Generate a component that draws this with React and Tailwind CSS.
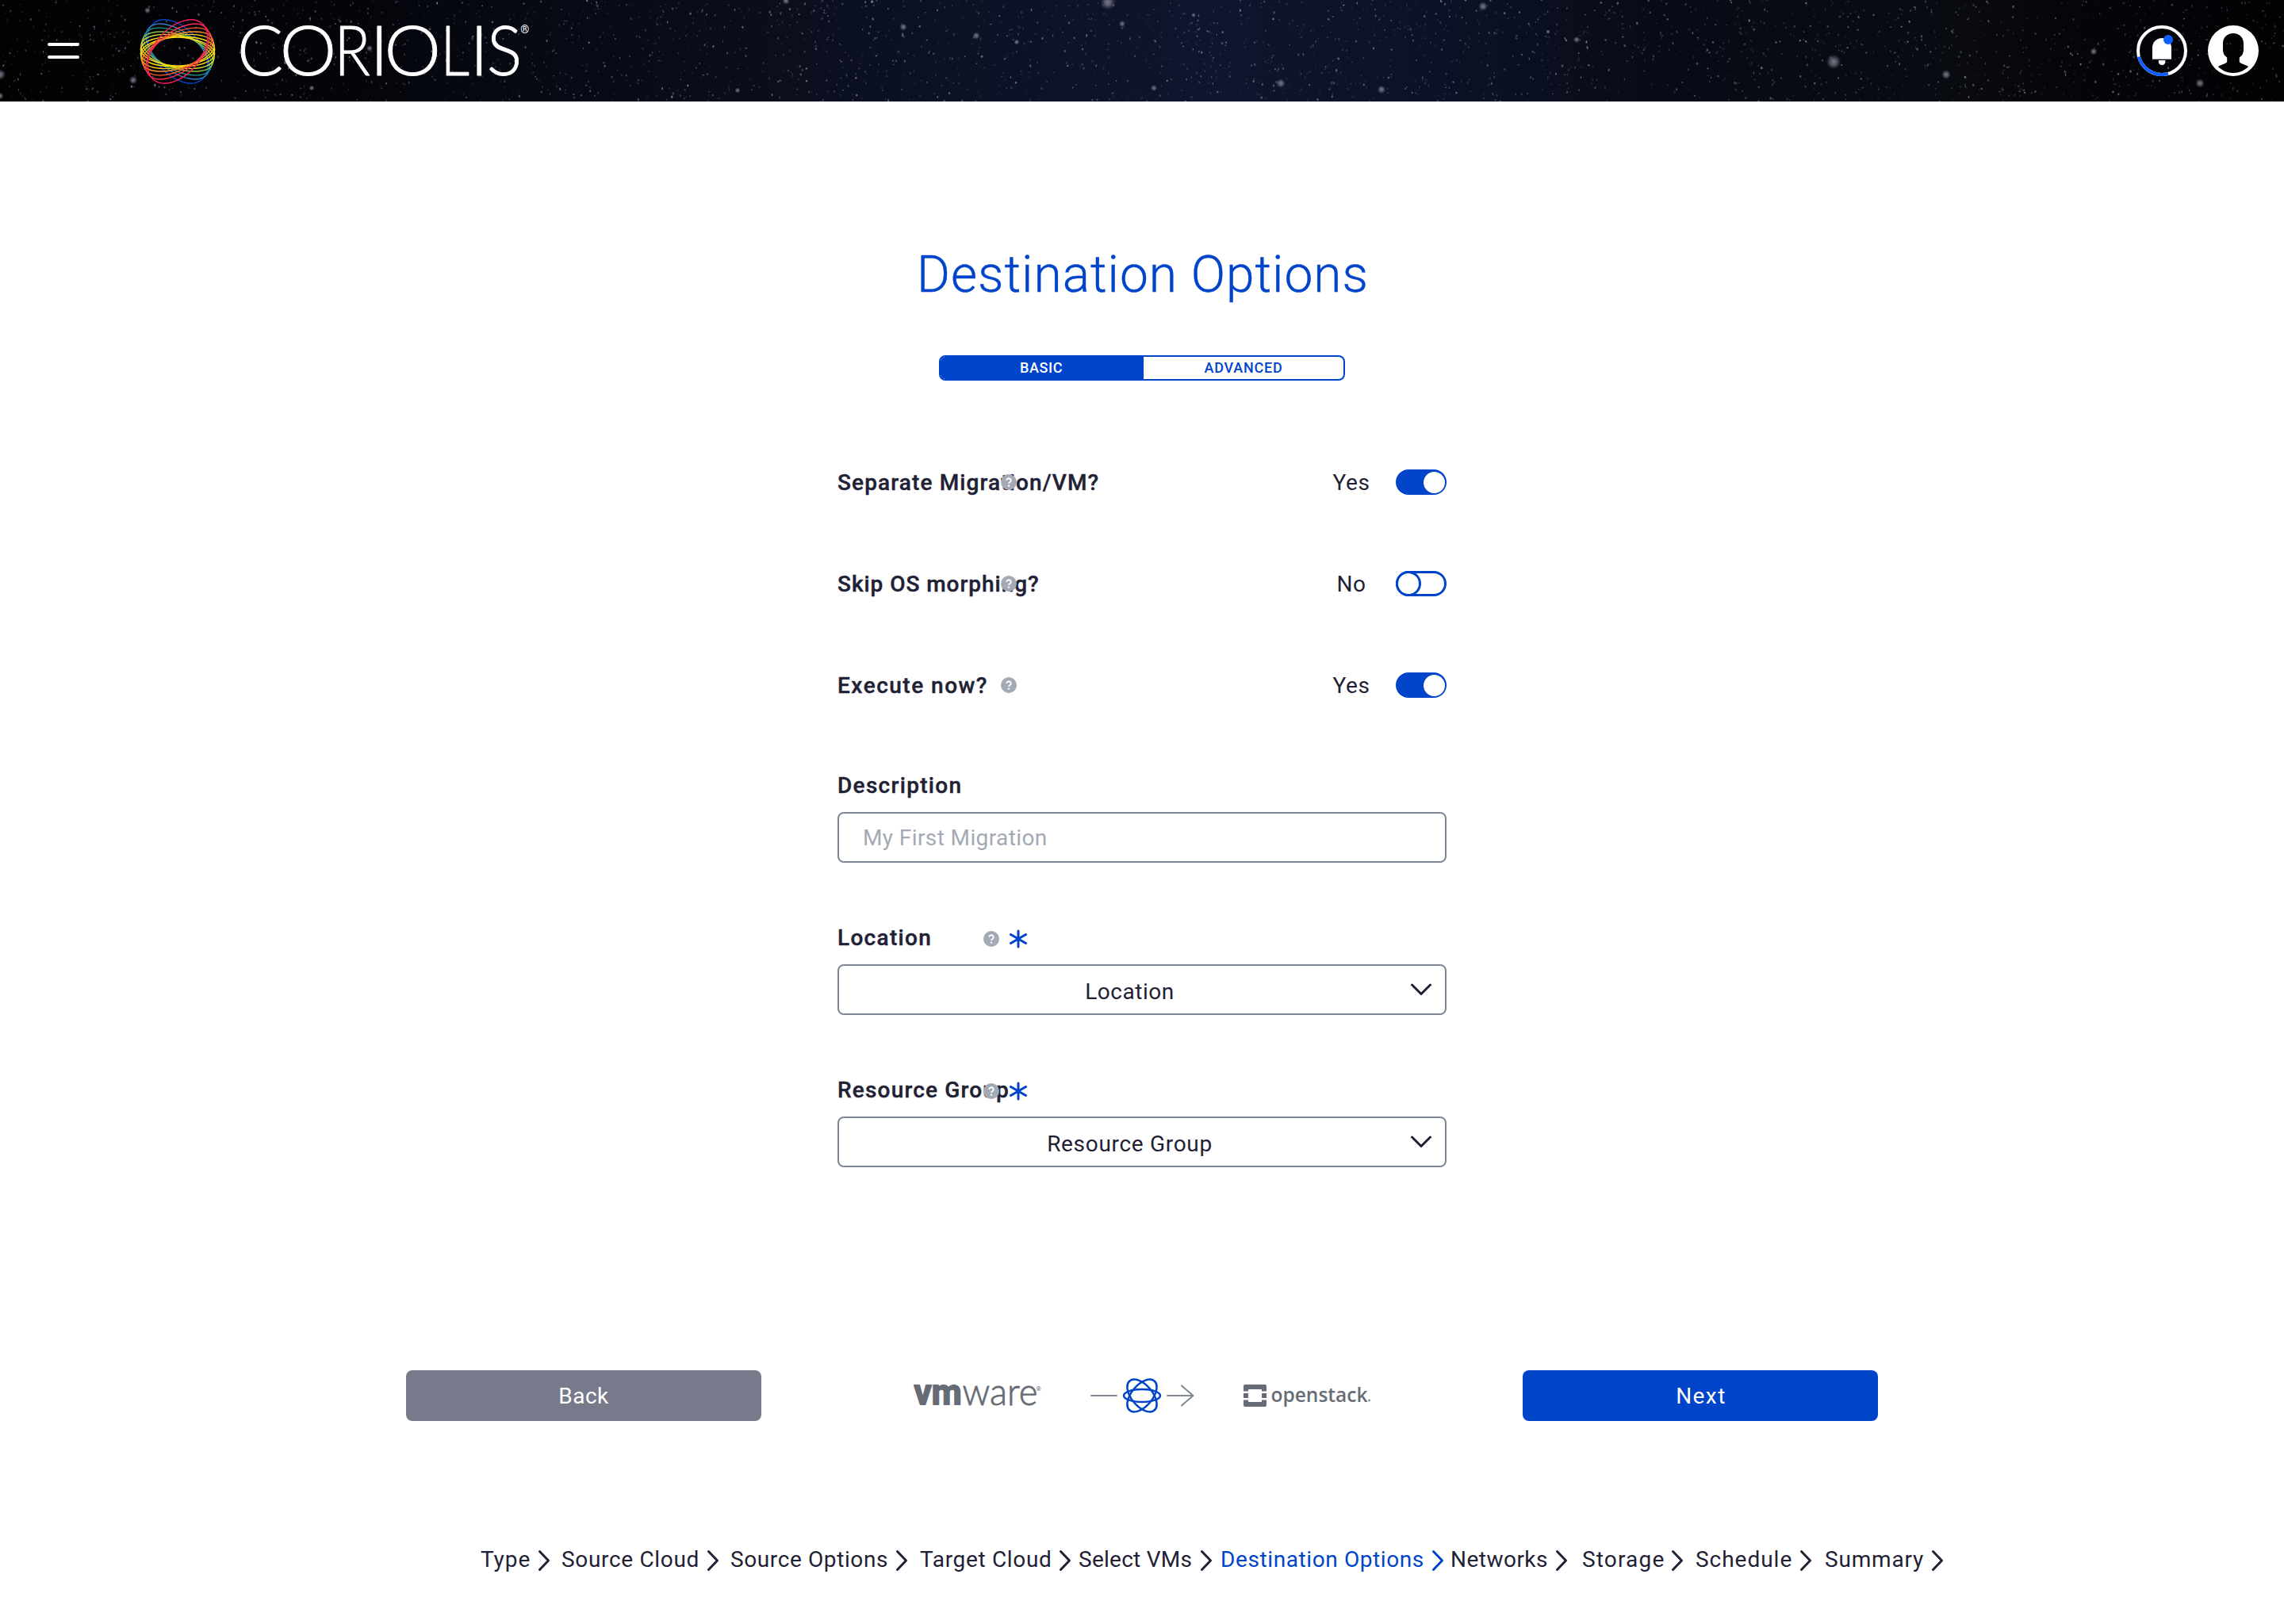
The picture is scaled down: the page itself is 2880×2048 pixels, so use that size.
import React from "react";

const FONT = "font-['Roboto','Open_Sans',sans-serif]";

/* Small seeded generator, so that the star field is the same on each load. */
function makeStars(count) {
  let seed = 20177;
  const next = () => {
    seed = (seed * 1664525 + 1013904223) % 4294967296;
    return seed / 4294967296;
  };
  return Array.from({ length: count }, () => ({
    x: next() * 2880,
    y: next() * 128,
    rx: 0.6 + next() * 0.8,
    ry: 0.7 + next() * 1.1,
    o: 0.1 + next() * next() * 0.55,
    a: next() * 60 - 30,
  }));
}

const STARS = makeStars(2500);

const GLOWS = [
  [186, 13, 3.5], [0, 94, 6], [168, 101, 4.5], [0, 121, 4], [466, 61, 3.5], [1397, 3, 8],
  [1870, 8, 5], [1139, 34, 4], [1231, 45, 4], [1282, 53, 3], [1988, 50, 3.5], [2312, 78, 8],
  [2454, 94, 5], [1615, 105, 5], [1742, 113, 4.5], [1455, 111, 3.5], [930, 114, 3],
  [1505, 19, 2.5], [1415, 30, 3.5], [991, 1, 4], [1952, 40, 2.5], [2774, 105, 5],
  [2640, 65, 4], [360, 79, 2.5], [393, 111, 3],
];

function StarField() {
  return (
    <svg className="absolute inset-0" width="2880" height="128" viewBox="0 0 2880 128">
      <defs>
        <linearGradient id="sky" x1="0" x2="1" y1="0" y2="0">
          <stop offset="0" stopColor="#020203" />
          <stop offset="0.15" stopColor="#04050a" />
          <stop offset="0.27" stopColor="#080b17" />
          <stop offset="0.4" stopColor="#0c1122" />
          <stop offset="0.53" stopColor="#0e152e" />
          <stop offset="0.63" stopColor="#0c1226" />
          <stop offset="0.73" stopColor="#080b16" />
          <stop offset="0.86" stopColor="#090b11" />
          <stop offset="0.9" stopColor="#05060b" />
          <stop offset="1" stopColor="#020204" />
        </linearGradient>
        <radialGradient id="glow">
          <stop offset="0" stopColor="#8b8b99" stopOpacity="0.85" />
          <stop offset="0.45" stopColor="#77788a" stopOpacity="0.65" />
          <stop offset="1" stopColor="#50546a" stopOpacity="0" />
        </radialGradient>
      </defs>
      <rect width="2880" height="128" fill="url(#sky)" />
      {STARS.map((s, i) => (
        <ellipse key={i} cx={s.x} cy={s.y} rx={s.rx} ry={s.ry} fill="#b9bccb" opacity={s.o}
          transform={`rotate(${s.a} ${s.x} ${s.y})`} />
      ))}
      {GLOWS.map(([x, y, r], i) => (
        <circle key={i} cx={x} cy={y} r={r * 1.2} fill="url(#glow)" />
      ))}
    </svg>
  );
}

const RINGS = [
  [18.3, 4, "#ffd21e", "#ffe500"],
  [20, 11, "#cddc39", "#ffc61a"],
  [21, 19, "#8bc34a", "#ff9429"],
  [23, 28, "#1c9c86", "#ff5a2b"],
  [25, 38, "#2f7fc1", "#ff2d55"],
  [29, 49, "#0044ca", "#f81d5e"],
];

/* glyph, scaled left edge, horizontal scale */
const WORDMARK = [
  ["C", 299, 1], ["O", 352.8, 1.05], ["R", 421.5, 0.87], ["I", 466.5, 1.05],
  ["O", 484.5, 1.05], ["L", 555.5, 0.84], ["I", 592.5, 1.05], ["S", 614, 0.96],
];

function CoriolisLogo() {
  return (
    <svg width="504" height="128" viewBox="176 0 504 128">
      <g fill="none" strokeWidth="1.4">
        {RINGS.slice().reverse().map(([b, t, cool]) => (
          <ellipse key={"c" + t} cx="224" cy="65" rx="46.8" ry={b} stroke={cool} transform={`rotate(${t} 224 65)`} />
        ))}
        {RINGS.map(([b, t, , warm]) => (
          <ellipse key={"w" + t} cx="224" cy="65" rx="46.8" ry={b} stroke={warm} transform={`rotate(${-t} 224 65)`} />
        ))}
      </g>
      <g fill="#fff" stroke="#fff" strokeWidth="0.9" strokeLinejoin="round" className="font-['Lato',sans-serif] font-light text-[86px]">
        {WORDMARK.map(([ch, x, k], i) => (
          <text key={i} transform={`translate(${x} 94.6) scale(${k} 1)`}>{ch}</text>
        ))}
      </g>
      <text x="656.2" y="41.5" fill="#fff" className="font-['Roboto',sans-serif] text-[14px]">®</text>
    </svg>
  );
}

function BellIcon() {
  return (
    <svg width="64" height="64" viewBox="0 0 64 64">
      <circle cx="32" cy="32" r="30" fill="none" stroke="#fff" strokeWidth="4" />
      <path d="M2.9 39.6A30 30 0 0 0 40 60.9" fill="none" stroke="#0f5eff" strokeWidth="4" />
      <path d="M20 42V28a12 12 0 0 1 24 0V42Z" fill="#fff" />
      <rect x="20" y="42" width="24" height="1" fill="#a4aab5" />
      <path d="M27.8 44H36.4V45.7a4.3 4.3 0 0 1-8.6 0Z" fill="#fff" />
      <circle cx="40" cy="18" r="6" fill="#0f5eff" />
    </svg>
  );
}

function AvatarIcon() {
  return (
    <svg width="64" height="64" viewBox="0 0 64 64">
      <path
        fill="#fff"
        fillRule="evenodd"
        d="M32 0a32 32 0 1 1 0 64a32 32 0 1 1 0-64ZM32 10C24 10 19 15.500 19 23V31C19 35.500 21 38.500 24.200 40.500V46.500C21.500 48.500 16 50 12.800 52C18 57 24.500 60 32 60S46 57 51.200 52C48 50 42.500 48.500 39.800 46.500V40.500C43 38.500 45 35.500 45 31V23C45 15.500 40 10 32 10Z"
      />
    </svg>
  );
}

function HelpIcon() {
  return (
    <svg width="20" height="20" viewBox="0 0 20 20">
      <circle cx="10" cy="10" r="10" fill="#a4aab5" />
      <path d="M7.200 7.700a2.800 2.500 0 1 1 4.300 2.200c-1 .6-1.500 1-1.500 2" fill="none" stroke="#fff" strokeWidth="1.8" />
      <circle cx="10" cy="14.600" r="1.200" fill="#fff" />
    </svg>
  );
}

function Asterisk() {
  return (
    <svg width="24" height="24" viewBox="0 0 24 24" stroke="#0044ca" strokeWidth="3" strokeLinecap="round">
      <path d="M12 2V22M2.500 6.500L21.500 17.500M21.500 6.500L2.500 17.500" />
    </svg>
  );
}

function Switch({ on }) {
  return (
    <div className={on
      ? "flex h-8 w-16 items-center justify-end rounded-full bg-[#0044ca] pr-[2px]"
      : "flex h-8 w-16 items-center rounded-full border-[3px] border-[#0044ca] bg-white"}>
      {on
        ? <div className="size-[27px] rounded-full bg-white" />
        : <div className="-ml-[3px] size-8 shrink-0 rounded-full border-[3px] border-[#0044ca] bg-white" />}
    </div>
  );
}

function SwitchRow({ label, labelClass, on, last }) {
  return (
    <div className={last ? "flex h-8 items-center" : "mb-24 flex h-8 items-center"}>
      <div className="relative flex h-8 items-center whitespace-nowrap">
        <span className={"pt-0.5 text-[28px] font-medium leading-8 [-webkit-text-stroke:0.4px] " + labelClass}>{label}</span>
        <span className="absolute left-[206px] top-1.5"><HelpIcon /></span>
      </div>
      <div className="ml-auto mr-8 w-12 pt-px text-center text-[28px] leading-8 tracking-[0.6px]">{on ? "Yes" : "No"}</div>
      <Switch on={on} />
    </div>
  );
}

function SelectField({ label, labelClass, valueClass }) {
  return (
    <div className="mt-[79px]">
      <div className="relative flex h-8 items-center">
        <span className={"text-[28px] font-medium leading-8 [-webkit-text-stroke:0.4px] " + labelClass}>{label}</span>
        <span className="absolute left-[184px] top-[7px]"><HelpIcon /></span>
        <span className="absolute left-[216px] top-[5px]"><Asterisk /></span>
      </div>
      <div className="mt-[17px] flex h-16 items-center rounded-lg border-2 border-[#7f8795] pl-[13px] pr-[16px]">
        <span className={"mt-1.5 flex-1 text-center text-[28px] leading-8 " + valueClass}>{label}</span>
        <svg width="28" height="16" viewBox="0 0 28 16" fill="none" stroke="#1f2134" strokeWidth="3" strokeLinecap="round" strokeLinejoin="round">
          <path d="M2.500 2L14 13.500L25.500 2" />
        </svg>
      </div>
    </div>
  );
}

function VmwareLogo() {
  return (
    <svg width="170" height="88" viewBox="1150 1716 170 88" fill="#666c76" stroke="#666c76">
      <text x="1152.500" y="1771" textLength="60" lengthAdjust="spacingAndGlyphs" strokeWidth="1.800" strokeLinejoin="round" className="font-['Roboto',sans-serif] text-[44px] font-bold">vm</text>
      <text x="1213.500" y="1771.500" textLength="95" lengthAdjust="spacingAndGlyphs" strokeWidth="0.800" className="font-['Lato',sans-serif] text-[47px] font-light">ware</text>
      <text x="1306.500" y="1754" stroke="none" className="font-['Roboto',sans-serif] text-[8px]">®</text>
    </svg>
  );
}

function TransferArrow() {
  return (
    <svg width="132" height="48" viewBox="1375 1736 132 48" fill="none">
      <g stroke="#7f8795" strokeWidth="2" strokeLinecap="round" strokeLinejoin="round">
        <path d="M1376 1760H1408M1472 1760H1504M1490 1747.500L1504.500 1760L1490 1772.500" />
      </g>
      <g stroke="#0044ca" strokeWidth="2.500">
        <ellipse cx="1440" cy="1760" rx="23" ry="8" />
        <ellipse cx="1440" cy="1760" rx="24.200" ry="13.200" transform="rotate(50 1440 1760)" />
        <ellipse cx="1440" cy="1760" rx="24.200" ry="13.200" transform="rotate(-50 1440 1760)" />
      </g>
    </svg>
  );
}

function OpenstackLogo() {
  return (
    <svg width="184" height="72" viewBox="1566 1724 184 72" fill="#666c76">
      <path d="M1570 1746H1595Q1597 1746 1597 1748V1754.500H1591V1753Q1591 1752 1590 1752H1575Q1574 1752 1574 1753V1754.500H1568V1748Q1568 1746 1570 1746Z" />
      <path d="M1568 1757H1574V1763H1568ZM1591 1757H1597V1763H1591Z" />
      <path d="M1568 1765.500H1574V1767Q1574 1768 1575 1768H1590Q1591 1768 1591 1767V1765.500H1597V1772Q1597 1774 1595 1774H1570Q1568 1774 1568 1772Z" />
      <text x="1602.500" y="1767.500" textLength="122" lengthAdjust="spacingAndGlyphs" className="font-['Open_Sans',sans-serif] text-[26px] font-semibold">openstack</text>
      <circle cx="1726.500" cy="1766" r="1.500" fill="#8d929c" />
    </svg>
  );
}

const STEPS = [
  ["Type", "w-[73px] tracking-[0.9px]", "mr-[15px]"],
  ["Source Cloud", "w-[184px] tracking-[0.68px]", "mr-[15px]"],
  ["Source Options", "w-[209px] tracking-[0.61px]", "mr-[16px]"],
  ["Target Cloud", "w-[176px] tracking-[0.66px]", "mr-[10px]"],
  ["Select VMs", "w-[154px] tracking-[0.26px]", "mr-[11px]"],
  ["Destination Options", "w-[267px] tracking-[0.6px]", "mr-[9px]"],
  ["Networks", "w-[133px] tracking-[0.48px]", "mr-[19px]"],
  ["Storage", "w-[113px] tracking-[1.17px]", "mr-[16px]"],
  ["Schedule", "w-[132px] tracking-[0.97px]", "mr-[17px]"],
  ["Summary", "w-[135px] tracking-[0.81px]", ""],
];

function Steps() {
  return (
    <nav className="mt-[158px] flex h-8 items-center self-start whitespace-nowrap pl-[606px] text-[28px] leading-8">
      {STEPS.map(([name, textClass, gapClass]) => (
        <div key={name} className={(name === "Destination Options" ? "flex items-center text-[#0044ca] " : "flex items-center text-[#1f2134] ") + gapClass}>
          <span className={"pt-0.5 " + textClass}>{name}</span>
          <svg className="mt-1 overflow-visible" width="14" height="26" viewBox="0 0 14 26" fill="none" stroke="currentColor" strokeWidth="3" strokeLinecap="round" strokeLinejoin="round">
            <path d="M1.500 1.500L12.500 13L1.500 24.500" />
          </svg>
        </div>
      ))}
    </nav>
  );
}

export default function App() {
  return (
    <div className={`flex h-[2048px] w-[2880px] flex-col items-center overflow-hidden bg-white text-[#1f2134] ${FONT}`}>
      <header className="relative h-32 w-full shrink-0">
        <StarField />
        <div className="relative flex h-full items-center pl-[60px] pr-8">
          <button className="flex flex-col gap-3">
            <span className="h-1 w-10 rounded-full bg-white" />
            <span className="h-1 w-10 rounded-full bg-white" />
          </button>
          <div className="ml-[76px]"><CoriolisLogo /></div>
          <div className="ml-auto flex gap-[26px]">
            <BellIcon />
            <AvatarIcon />
          </div>
        </div>
      </header>

      <h1 className="mt-[179px] h-20 whitespace-nowrap pl-[2px] text-[64px] font-light leading-[80px] tracking-[1.01px] text-[#0044ca] [-webkit-text-stroke:0.4px]">Destination Options</h1>

      <div className="mt-[61px] flex h-8 w-[512px] overflow-hidden rounded-lg border-2 border-[#0044ca] text-[18px] font-medium leading-7">
        <div className="w-64 bg-[#0044ca] pr-0.5 text-center tracking-[0.58px] text-white">BASIC</div>
        <div className="w-[252px] text-center tracking-[0.77px] text-[#0044ca]">ADVANCED</div>
      </div>

      <section className="mt-28 w-[768px]">
        <SwitchRow label="Separate Migration/VM?" labelClass="tracking-[1.12px]" on />
        <SwitchRow label="Skip OS morphing?" labelClass="tracking-[0.96px]" />
        <SwitchRow label="Execute now?" labelClass="tracking-[1.5px]" on last />

        <div className="mt-[95px]">
          <div className="flex h-8 items-center text-[28px] font-medium leading-8 tracking-[1.3px] [-webkit-text-stroke:0.4px]">Description</div>
          <div className="mt-[17px] flex h-16 items-center rounded-lg border-2 border-[#7f8795] pl-[30px] pt-px text-[28px] leading-8 tracking-[0.4px] text-[#a4aab5]">My First Migration</div>
        </div>

        <SelectField label="Location" labelClass="tracking-[1.3px]" valueClass="tracking-[0.55px]" />
        <SelectField label="Resource Group" labelClass="tracking-[1.18px]" valueClass="tracking-[0.69px]" />
      </section>

      <div className="mt-64 flex h-16 w-[1856px] shrink-0 items-center text-[28px] leading-8 text-white">
        <button className="h-16 w-[448px] rounded-lg bg-[#787a8b] pt-0.5 tracking-[0.46px]">Back</button>
        <div className="ml-[190px]"><VmwareLogo /></div>
        <div className="ml-[55px]"><TransferArrow /></div>
        <div className="ml-[59px]"><OpenstackLogo /></div>
        <button className="ml-auto h-16 w-[448px] rounded-lg bg-[#0044ca] pl-[2px] pt-0.5 tracking-[1.4px]">Next</button>
      </div>

      <Steps />
    </div>
  );
}
